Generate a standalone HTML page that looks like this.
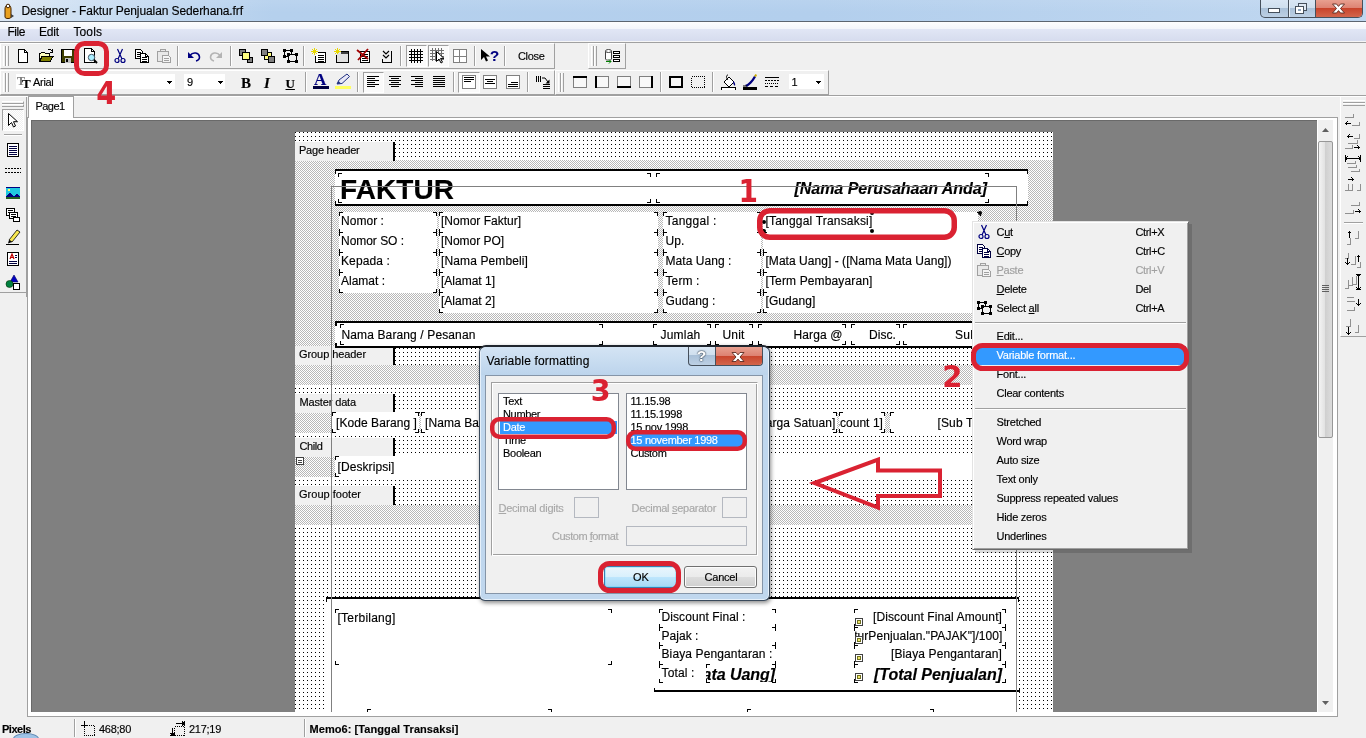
<!DOCTYPE html><html><head><meta charset="utf-8"><title>Designer - Faktur Penjualan Sederhana.frf</title><style>
html,body{margin:0;padding:0}
body{will-change:transform;width:1366px;height:738px;overflow:hidden;position:relative;background:#f0f0f0;font-family:"Liberation Sans",sans-serif;font-size:11px;color:#000}
.a{position:absolute;box-sizing:border-box}
.t{position:absolute;white-space:nowrap;overflow:visible;-webkit-text-stroke:.15px}
.tb{border:1px solid;border-color:#fff #a0a0a0 #a0a0a0 #fff}
.grip{border-left:1px solid #fff;border-right:1px solid #a0a0a0;width:3px;background:#f0f0f0}
.sep{width:2px;border-left:1px solid #a0a0a0;border-right:1px solid #fff}
.dn{background:#fafafa;border:1px solid;border-color:#a0a0a0 #fff #fff #a0a0a0}
.dots{background-color:#fff;background-image:linear-gradient(90deg,#000 1px,#fff 1px),linear-gradient(#000 1px,#fff 1px);background-size:4px 4px;background-blend-mode:lighten,normal}
.hatch{background:repeating-conic-gradient(#fff 0 25%,#b8b8b8 0 50%) 0 0/2px 2px}
.lab{background:#f0f0f0;border-right:2px solid #000}
.w{background:#fff}
.k{background:#000}
.u{text-decoration:underline}
.m{font-family:"Liberation Sans",sans-serif}
</style></head><body>
<div class="a" style="left:0px;top:0px;width:1366px;height:21px;background:linear-gradient(90deg,#dde8f5 0,#cbdef2 7%,#b5d0ed 20%,#b3cfed 60%,#c0d7f0 100%)"></div>
<div class="a" style="left:0px;top:0px;width:1366px;height:21px;background:linear-gradient(rgba(255,255,255,.08),rgba(255,255,255,0) 60%)"></div>
<div class="a" style="left:0px;top:21px;width:1366px;height:1px;background:#5c6570"></div>
<svg class="a" style="left:3px;top:3px" width="12" height="17" viewBox="0 0 12 17"><path d="M2 6c0-2 1-4 3-4s3 2 3 4v8c0 2-6 2-6 0z" fill="#e8a020" stroke="#402000"/><circle cx="5" cy="3" r="1.800" fill="#fff" stroke="#402000"/><path d="M8 11l3 2l-3 2z" fill="#404040"/></svg>
<div class="t" style="left:21.5px;top:3px;height:17px;line-height:17px;font-size:12px;letter-spacing:-0.097px;">Designer - Faktur Penjualan Sederhana.frf</div>
<div class="a" style="left:1260px;top:0px;width:103px;height:18px;border:1px solid #46505c;border-top:none;border-radius:0 0 5px 5px;overflow:hidden;background:linear-gradient(#d9e6f4 0,#cfdfee 45%,#a9c0d8 46%,#bdd0e4 100%)"><div class="a" style="left:27px;top:0;width:1px;height:18px;background:#46505c"></div><div class="a" style="left:28px;top:0;width:1px;height:18px;background:#e8f0f8"></div><div class="a" style="left:54px;top:0;width:48px;height:18px;border-left:1px solid #46505c;background:linear-gradient(#e8a090 0,#dd8272 45%,#c8432b 46%,#d4694f 100%)"></div></div>
<svg class="a" style="left:1260px;top:0" width="103" height="18" viewBox="0 0 103 18"><rect x="8.500" y="8.500" width="11" height="4" fill="#fff" stroke="#46505c"/><rect x="38.500" y="3.500" width="8" height="7" fill="#dfe9f4" stroke="#46505c"/><rect x="35.500" y="6.500" width="8" height="7" fill="#fff" stroke="#46505c"/><rect x="38" y="9" width="3" height="2" fill="#8fa6bf"/><path d="M72.500 4h4l2 2.400l2-2.400h4l-4 4.500l4 4.500h-4l-2-2.400l-2 2.400h-4l4-4.500z" fill="#fff" stroke="#5a2a20" stroke-width=".9"/></svg>
<div class="a" style="left:0px;top:22px;width:1366px;height:19px;background:linear-gradient(#fdfdfe 0,#f4f6fb 35%,#e1e6f5 38%,#d6dcee 100%)"></div>
<div class="a" style="left:0px;top:41px;width:1366px;height:1px;background:#f6f6f6"></div>
<div class="a" style="left:0px;top:42px;width:1366px;height:1px;background:#a0a0a0"></div>
<div class="t" style="left:7.5px;top:24px;height:16px;line-height:16px;font-size:12px;letter-spacing:-0.459px;">File</div>
<div class="t" style="left:39px;top:24px;height:16px;line-height:16px;font-size:12px;letter-spacing:-0.169px;">Edit</div>
<div class="t" style="left:73.5px;top:24px;height:16px;line-height:16px;font-size:12px;letter-spacing:0.097px;">Tools</div>
<div class="a tb" style="left:0px;top:43px;width:555px;height:26px;"></div>
<div class="a grip" style="left:3px;top:46px;width:3px;height:20px;"></div>
<div class="a grip" style="left:6px;top:46px;width:3px;height:20px;"></div>
<div class="a dn" style="left:405.5px;top:45px;width:21.0px;height:22px;"></div>
<div class="a dn" style="left:427.5px;top:45px;width:21.0px;height:22px;"></div>
<svg class="a" style="left:15px;top:48px" width="16" height="16" viewBox="0 0 16 16" shape-rendering="crispEdges"><path d="M3.5 1.5h6l3 3v10h-9z" fill="#fff" stroke="#000"/><path d="M9.5 1.5v3h3" fill="none" stroke="#000"/></svg>
<svg class="a" style="left:38px;top:48px" width="16" height="16" viewBox="0 0 16 16" shape-rendering="crispEdges"><path d="M1.5 13.5v-8h1l1-1h3l1 1h4v2" fill="#ffffc0" stroke="#000"/><path d="M1.5 13.5l2.5-5h11l-3 5z" fill="#808000" stroke="#000"/><path d="M9.5 2.5c1.5-1.5 3.5-1 4 .5" fill="none" stroke="#000"/><path d="M14.5 1v3h-3" fill="none" stroke="#000"/></svg>
<svg class="a" style="left:60px;top:48px" width="16" height="16" viewBox="0 0 16 16" shape-rendering="crispEdges"><rect x="1.5" y="1.5" width="13" height="13" fill="#404000" stroke="#000"/><rect x="4" y="2" width="8" height="6" fill="#fff"/><rect x="5" y="10" width="6" height="5" fill="#c0c0c0"/><rect x="6" y="11" width="2" height="3" fill="#000"/></svg>
<svg class="a" style="left:82px;top:48px" width="16" height="16" viewBox="0 0 16 16" shape-rendering="crispEdges"><path d="M2.5 .5h7l3 3v11h-10z" fill="#fff" stroke="#000"/><path d="M9.5 .5v3h3" fill="none" stroke="#000"/><circle cx="9.5" cy="9.5" r="3.2" fill="#aef" stroke="#456" shape-rendering="auto"/><path d="M12 12l3 3" stroke="#000" stroke-width="2" shape-rendering="auto"/></svg>
<svg class="a" style="left:112px;top:48px" width="16" height="16" viewBox="0 0 16 16" shape-rendering="crispEdges"><g shape-rendering="auto" fill="none" stroke="#000080" stroke-width="1.2"><path d="M5.5 1l4.5 10M10.5 1l-4.5 10"/><circle cx="5" cy="12.5" r="2"/><circle cx="11" cy="12.5" r="2"/></g></svg>
<svg class="a" style="left:134px;top:48px" width="16" height="16" viewBox="0 0 16 16" shape-rendering="crispEdges"><path d="M1.5 1.5h5l2 2v7h-7z" fill="#fff" stroke="#000"/><rect x="3" y="4" width="4" height="1" fill="#000"/><rect x="3" y="6" width="4" height="1" fill="#000"/><rect x="3" y="8" width="4" height="1" fill="#000"/><path d="M6.5 5.5h5l3 3v6h-8z" fill="#fff" stroke="#000"/><path d="M11.5 5.5v3h3" fill="none" stroke="#000"/><rect x="8" y="9" width="5" height="1" fill="#000"/><rect x="8" y="11" width="5" height="1" fill="#000"/><rect x="8" y="13" width="5" height="1" fill="#000"/></svg>
<svg class="a" style="left:156px;top:48px" width="16" height="16" viewBox="0 0 16 16" shape-rendering="crispEdges"><path d="M1.5 3.5h11v10h-11z" fill="#e8e8e8" stroke="#a0a0a0"/><path d="M4.5 3.5v-2h5v2z" fill="#e8e8e8" stroke="#a0a0a0"/><path d="M6.5 7.5h6l2 2v5h-8z" fill="#f4f4f4" stroke="#a0a0a0"/><rect x="8" y="10" width="5" height="1" fill="#a0a0a0"/><rect x="8" y="12" width="5" height="1" fill="#a0a0a0"/></svg>
<svg class="a" style="left:186px;top:48px" width="16" height="16" viewBox="0 0 16 16" shape-rendering="crispEdges"><g shape-rendering="auto"><path d="M4 7.5c3-4 9-3 9.500 1.500c0 2-1.500 3.500-3.500 4" fill="none" stroke="#000080" stroke-width="1.600"/><path d="M2 4v6h6z" fill="#000080"/></g></svg>
<svg class="a" style="left:208px;top:48px" width="16" height="16" viewBox="0 0 16 16" shape-rendering="crispEdges"><g shape-rendering="auto"><path d="M12 7.5c-3-4-9-3-9.500 1.500c0 2 1.500 3.500 3.500 4" fill="none" stroke="#b4b4b4" stroke-width="1.600"/><path d="M14 4v6h-6z" fill="#b4b4b4"/></g></svg>
<svg class="a" style="left:238px;top:48px" width="16" height="16" viewBox="0 0 16 16" shape-rendering="crispEdges"><rect x="1.500" y="1.500" width="6" height="6" fill="#808080" stroke="#000"/><rect x="9.500" y="9.500" width="5" height="5" fill="#808080" stroke="#000"/><rect x="4.500" y="4.500" width="7" height="7" fill="#ffff80" stroke="#000"/></svg>
<svg class="a" style="left:260px;top:48px" width="16" height="16" viewBox="0 0 16 16" shape-rendering="crispEdges"><rect x="4.500" y="4.500" width="7" height="7" fill="#ffff80" stroke="#000"/><rect x="1.500" y="1.500" width="6" height="6" fill="#808080" stroke="#000"/><rect x="8.500" y="8.500" width="6" height="6" fill="#808080" stroke="#000"/></svg>
<svg class="a" style="left:282px;top:48px" width="16" height="16" viewBox="0 0 16 16" shape-rendering="crispEdges"><rect x="2.500" y="2.500" width="7" height="6" fill="none" stroke="#000"/><rect x="6.500" y="6.500" width="8" height="7" fill="#f0f0f0" stroke="#000"/><rect x="1" y="1" width="3" height="3" fill="#000"/><rect x="8" y="1" width="3" height="3" fill="#000"/><rect x="1" y="7" width="3" height="3" fill="#000"/><rect x="5" y="5" width="3" height="3" fill="#000"/><rect x="13" y="5" width="3" height="3" fill="#000"/><rect x="5" y="12" width="3" height="3" fill="#000"/><rect x="13" y="12" width="3" height="3" fill="#000"/></svg>
<svg class="a" style="left:311px;top:48px" width="16" height="16" viewBox="0 0 16 16" shape-rendering="crispEdges"><g fill="#e8d800"><rect x="3" y="0" width="1" height="7"/><rect x="0" y="3" width="7" height="1"/><rect x="1" y="1" width="1" height="1"/><rect x="5" y="1" width="1" height="1"/><rect x="1" y="5" width="1" height="1"/><rect x="5" y="5" width="1" height="1"/><rect x="2" y="2" width="3" height="3"/></g><path d="M6.500 4.500h8v10h-10v-7" fill="#fff" stroke="#000"/><rect x="7" y="7" width="6" height="1" fill="#000"/><rect x="7" y="9" width="6" height="1" fill="#000"/><rect x="7" y="11" width="6" height="1" fill="#000"/><rect x="7" y="13" width="6" height="1" fill="#000"/></svg>
<svg class="a" style="left:334px;top:48px" width="16" height="16" viewBox="0 0 16 16" shape-rendering="crispEdges"><g fill="#e8d800"><rect x="3" y="0" width="1" height="7"/><rect x="0" y="3" width="7" height="1"/><rect x="1" y="1" width="1" height="1"/><rect x="5" y="1" width="1" height="1"/><rect x="1" y="5" width="1" height="1"/><rect x="5" y="5" width="1" height="1"/><rect x="2" y="2" width="3" height="3"/></g><path d="M6.500 3.500h8v11h-12v-8" fill="#e0e0e0" stroke="#000"/><rect x="7" y="4" width="7" height="2" fill="#404040"/></svg>
<svg class="a" style="left:356px;top:48px" width="16" height="16" viewBox="0 0 16 16" shape-rendering="crispEdges"><path d="M4.500 3.500h9v11h-9z" fill="#fff" stroke="#000"/><rect x="6" y="6" width="6" height="1" fill="#000"/><rect x="6" y="8" width="6" height="1" fill="#000"/><rect x="6" y="10" width="6" height="1" fill="#000"/><rect x="6" y="12" width="6" height="1" fill="#000"/><g shape-rendering="auto"><path d="M1 2l11 9M12 1l-10 11" stroke="#a00000" stroke-width="1.800"/></g></svg>
<svg class="a" style="left:379px;top:48px" width="16" height="16" viewBox="0 0 16 16" shape-rendering="crispEdges"><path d="M12.500 3v11.500h-9v-4" fill="none" stroke="#000"/><g shape-rendering="auto" fill="none" stroke="#000" stroke-width="1.200"><path d="M4 3l3 3l3-3M4 7l3 3l3-3"/></g></svg>
<svg class="a" style="left:408px;top:48px" width="16" height="16" viewBox="0 0 16 16" shape-rendering="crispEdges"><rect x="3" y="1" width="1" height="14" fill="#000"/><rect x="1" y="3" width="14" height="1" fill="#000"/><rect x="6" y="1" width="1" height="14" fill="#000"/><rect x="1" y="6" width="14" height="1" fill="#000"/><rect x="9" y="1" width="1" height="14" fill="#000"/><rect x="1" y="9" width="14" height="1" fill="#000"/><rect x="12" y="1" width="1" height="14" fill="#000"/><rect x="1" y="12" width="14" height="1" fill="#000"/></svg>
<svg class="a" style="left:430px;top:48px" width="16" height="16" viewBox="0 0 16 16" shape-rendering="crispEdges"><rect x="2" y="0" width="1" height="13" fill="#707070"/><rect x="0" y="2" width="14" height="1" fill="#707070"/><rect x="5" y="0" width="1" height="13" fill="#707070"/><rect x="0" y="5" width="14" height="1" fill="#707070"/><rect x="8" y="0" width="1" height="13" fill="#707070"/><rect x="0" y="8" width="14" height="1" fill="#707070"/><rect x="11" y="0" width="1" height="13" fill="#707070"/><rect x="0" y="11" width="14" height="1" fill="#707070"/><path d="M6.500 3.500v10l2.500-2.500l2 4l1.500-.8l-2-3.800h3.500z" fill="#fff" stroke="#000" shape-rendering="auto"/></svg>
<svg class="a" style="left:452px;top:48px" width="16" height="16" viewBox="0 0 16 16" shape-rendering="crispEdges"><rect x="1.500" y="1.500" width="13" height="13" fill="#fff" stroke="#808080"/><rect x="7" y="2" width="1" height="12" fill="#808080"/><rect x="2" y="8" width="12" height="1" fill="#808080"/></svg>
<svg class="a" style="left:480px;top:48px" width="16" height="16" viewBox="0 0 16 16" shape-rendering="crispEdges"><path d="M1 1v11l3-3l2 4.500l2-1l-2-4h4z" fill="#000" shape-rendering="auto"/></svg>
<div class="t" style="left:490px;top:46px;height:20px;line-height:20px;font-size:15px;font-weight:bold;color:#000080;">?</div>
<div class="a sep" style="left:177px;top:46px;width:2px;height:20px;"></div>
<div class="a sep" style="left:229.5px;top:46px;width:2px;height:20px;"></div>
<div class="a sep" style="left:303px;top:46px;width:2px;height:20px;"></div>
<div class="a sep" style="left:400px;top:46px;width:2px;height:20px;"></div>
<div class="a sep" style="left:473.5px;top:46px;width:2px;height:20px;"></div>
<div class="a sep" style="left:503.5px;top:46px;width:2px;height:20px;"></div>
<div class="t" style="left:518px;top:49px;height:14px;line-height:14px;font-size:11px;letter-spacing:-0.325px;">Close</div>
<div class="a tb" style="left:588px;top:43px;width:38px;height:26px;"></div>
<div class="a grip" style="left:591px;top:46px;width:3px;height:20px;"></div>
<div class="a grip" style="left:594px;top:46px;width:3px;height:20px;"></div>
<svg class="a" style="left:604px;top:48px" width="16" height="16" viewBox="0 0 16 16" shape-rendering="crispEdges"><g shape-rendering="auto"><path d="M1.500 3v8c0 1.500 6 1.500 6 0v-8" fill="#fff" stroke="#404040"/><ellipse cx="4.500" cy="3" rx="3" ry="1.500" fill="#fff" stroke="#404040"/></g><rect x="9.500" y="3.500" width="6" height="2" fill="#fff" stroke="#000"/><rect x="9.500" y="7.500" width="6" height="2" fill="#fff" stroke="#000"/><rect x="9.500" y="11.500" width="6" height="2" fill="#fff" stroke="#000"/><path d="M2 13.500h5M5 11.500l2 2l-2 2" fill="none" stroke="#008000" shape-rendering="auto"/></svg>
<div class="a tb" style="left:0px;top:70px;width:555px;height:25px;"></div>
<div class="a grip" style="left:3px;top:73px;width:3px;height:19px;"></div>
<div class="a grip" style="left:6px;top:73px;width:3px;height:19px;"></div>
<div class="a" style="left:16px;top:74px;width:159px;height:15px;background:#fff"></div>
<div class="t" style="left:17px;top:73px;height:16px;line-height:16px;font-size:12px;font-weight:bold;color:#808080;font-family:'Liberation Serif',serif;">T</div>
<div class="t" style="left:22px;top:76px;height:16px;line-height:16px;font-size:13px;font-weight:bold;font-family:'Liberation Serif',serif;">T</div>
<div class="t" style="left:33px;top:75px;height:14px;line-height:14px;font-size:11px;letter-spacing:-0.301px;">Arial</div>
<svg class="a" style="left:167px;top:81px" width="5" height="3" shape-rendering="crispEdges"><path d="M0 0h5v1h-1v1h-1v1h-1v-1h-1v-1h-1z" fill="#000"/></svg>
<div class="a" style="left:184px;top:74px;width:41px;height:15px;background:#fff"></div>
<div class="t" style="left:187px;top:75px;height:14px;line-height:14px;font-size:11px;">9</div>
<svg class="a" style="left:218px;top:81px" width="5" height="3" shape-rendering="crispEdges"><path d="M0 0h5v1h-1v1h-1v1h-1v-1h-1v-1h-1z" fill="#000"/></svg>
<div class="t" style="left:241px;top:74px;height:18px;line-height:18px;font-size:15px;font-weight:bold;font-family:'Liberation Serif',serif;">B</div>
<div class="t" style="left:264px;top:74px;height:18px;line-height:18px;font-size:15px;font-weight:bold;font-style:italic;font-family:'Liberation Serif',serif;">I</div>
<div class="t" style="left:285.5px;top:75px;height:18px;line-height:18px;font-size:13px;font-weight:bold;font-family:'Liberation Serif',serif;text-decoration:underline;">U</div>
<div class="a sep" style="left:304.5px;top:72px;width:2px;height:20px;"></div>
<div class="t" style="left:314px;top:70px;height:20px;line-height:20px;font-size:17px;font-weight:bold;color:#000080;font-family:'Liberation Serif',serif;">A</div>
<div class="a" style="left:313px;top:86px;width:16px;height:3px;background:#000040"></div>
<svg class="a" style="left:335px;top:73px" width="16" height="14" viewBox="0 0 16 14"><path d="M2 11l2-4l8-6l2.500 2.500l-7.500 7z" fill="#e8e8f8" stroke="#203080" stroke-width="1"/><path d="M2 11l1.500-3l2.500 2.500z" fill="#203080"/></svg>
<div class="a" style="left:335px;top:86px;width:16px;height:3px;background:#ffff60"></div>
<div class="a sep" style="left:356.5px;top:72px;width:2px;height:20px;"></div>
<div class="a dn" style="left:362.5px;top:72px;width:21.0px;height:21px;"></div>
<svg class="a" style="left:365px;top:74px" width="16" height="16" viewBox="0 0 16 16" shape-rendering="crispEdges"><rect x="2" y="2" width="12" height="1" fill="#000"/><rect x="2" y="4" width="8" height="1" fill="#000"/><rect x="2" y="6" width="12" height="1" fill="#000"/><rect x="2" y="8" width="8" height="1" fill="#000"/><rect x="2" y="10" width="12" height="1" fill="#000"/><rect x="2" y="12" width="8" height="1" fill="#000"/></svg>
<svg class="a" style="left:387px;top:74px" width="16" height="16" viewBox="0 0 16 16" shape-rendering="crispEdges"><rect x="2" y="2" width="12" height="1" fill="#000"/><rect x="4" y="4" width="8" height="1" fill="#000"/><rect x="2" y="6" width="12" height="1" fill="#000"/><rect x="4" y="8" width="8" height="1" fill="#000"/><rect x="2" y="10" width="12" height="1" fill="#000"/><rect x="4" y="12" width="8" height="1" fill="#000"/></svg>
<svg class="a" style="left:409px;top:74px" width="16" height="16" viewBox="0 0 16 16" shape-rendering="crispEdges"><rect x="2" y="2" width="12" height="1" fill="#000"/><rect x="6" y="4" width="8" height="1" fill="#000"/><rect x="2" y="6" width="12" height="1" fill="#000"/><rect x="6" y="8" width="8" height="1" fill="#000"/><rect x="2" y="10" width="12" height="1" fill="#000"/><rect x="6" y="12" width="8" height="1" fill="#000"/></svg>
<svg class="a" style="left:431px;top:74px" width="16" height="16" viewBox="0 0 16 16" shape-rendering="crispEdges"><rect x="2" y="2" width="12" height="1" fill="#000"/><rect x="2" y="4" width="12" height="1" fill="#000"/><rect x="2" y="6" width="12" height="1" fill="#000"/><rect x="2" y="8" width="12" height="1" fill="#000"/><rect x="2" y="10" width="12" height="1" fill="#000"/><rect x="2" y="12" width="12" height="1" fill="#000"/></svg>
<div class="a sep" style="left:453px;top:72px;width:2px;height:20px;"></div>
<div class="a dn" style="left:458px;top:72px;width:22px;height:21px;"></div>
<svg class="a" style="left:461px;top:74px" width="16" height="16" viewBox="0 0 16 16" shape-rendering="crispEdges"><rect x="1.500" y="1.500" width="13" height="13" fill="#fff" stroke="#808080"/><rect x="3" y="3" width="10" height="1" fill="#000"/><rect x="3" y="5" width="10" height="1" fill="#000"/><rect x="3" y="7" width="7" height="1" fill="#000"/></svg>
<svg class="a" style="left:482px;top:74px" width="16" height="16" viewBox="0 0 16 16" shape-rendering="crispEdges"><rect x="1.500" y="1.500" width="13" height="13" fill="#fff" stroke="#808080"/><rect x="3" y="5" width="10" height="1" fill="#000"/><rect x="5" y="7" width="6" height="1" fill="#000"/><rect x="3" y="9" width="10" height="1" fill="#000"/></svg>
<svg class="a" style="left:505px;top:74px" width="16" height="16" viewBox="0 0 16 16" shape-rendering="crispEdges"><rect x="1.500" y="1.500" width="13" height="13" fill="#fff" stroke="#808080"/><rect x="6" y="8" width="7" height="1" fill="#000"/><rect x="3" y="10" width="10" height="1" fill="#000"/><rect x="3" y="12" width="10" height="1" fill="#000"/></svg>
<div class="a sep" style="left:526.5px;top:72px;width:2px;height:20px;"></div>
<svg class="a" style="left:535px;top:74px" width="16" height="16" viewBox="0 0 16 16" shape-rendering="crispEdges"><rect x="1" y="2" width="1" height="6" fill="#000"/><rect x="3" y="2" width="1" height="6" fill="#000"/><rect x="5" y="2" width="1" height="6" fill="#000"/><path d="M7 4h3l3 4" fill="none" stroke="#000" shape-rendering="auto"/><path d="M14.500 5.500v4h-4z" fill="#000" shape-rendering="auto"/><rect x="8" y="10" width="7" height="1" fill="#000"/><rect x="8" y="12" width="7" height="1" fill="#000"/><rect x="8" y="14" width="7" height="1" fill="#000"/></svg>
<div class="a tb" style="left:555px;top:70px;width:274px;height:25px;"></div>
<div class="a grip" style="left:558px;top:73px;width:3px;height:19px;"></div>
<div class="a grip" style="left:561px;top:73px;width:3px;height:19px;"></div>
<svg class="a" style="left:572px;top:74px" width="16" height="16" viewBox="0 0 16 16" shape-rendering="crispEdges"><rect x="1.500" y="2.500" width="13" height="11" fill="#f8f8f8" stroke="#808080"/><rect x="1" y="2" width="14" height="2" fill="#000"/></svg>
<svg class="a" style="left:594px;top:74px" width="16" height="16" viewBox="0 0 16 16" shape-rendering="crispEdges"><rect x="1.500" y="2.500" width="13" height="11" fill="#f8f8f8" stroke="#808080"/><rect x="1" y="2" width="2" height="12" fill="#000"/></svg>
<svg class="a" style="left:616px;top:74px" width="16" height="16" viewBox="0 0 16 16" shape-rendering="crispEdges"><rect x="1.500" y="2.500" width="13" height="11" fill="#f8f8f8" stroke="#808080"/><rect x="1" y="12" width="14" height="2" fill="#000"/></svg>
<svg class="a" style="left:638px;top:74px" width="16" height="16" viewBox="0 0 16 16" shape-rendering="crispEdges"><rect x="1.500" y="2.500" width="13" height="11" fill="#f8f8f8" stroke="#808080"/><rect x="13" y="2" width="2" height="12" fill="#000"/></svg>
<svg class="a" style="left:668px;top:74px" width="16" height="16" viewBox="0 0 16 16" shape-rendering="crispEdges"><rect x="2" y="3" width="12" height="10" fill="#f8f8f8" stroke="#000" stroke-width="2"/></svg>
<svg class="a" style="left:690px;top:74px" width="16" height="16" viewBox="0 0 16 16" shape-rendering="crispEdges"><rect x="1.500" y="2.500" width="13" height="11" fill="none" stroke="#000" stroke-dasharray="1 1"/></svg>
<svg class="a" style="left:720px;top:74px" width="16" height="16" viewBox="0 0 16 16" shape-rendering="crispEdges"><g shape-rendering="auto"><path d="M4 8l5-5l5 5l-5 5z" fill="#fff" stroke="#000"/><path d="M8 1c-2 0-2 3 0 5" fill="none" stroke="#000"/><path d="M13 7c2 1 2.500 3 2 5c-1.500-1-2-3-2-5z" fill="#000080"/></g><rect x="1" y="13" width="14" height="3" fill="#fff" stroke="#000" stroke-width="1"/></svg>
<svg class="a" style="left:742px;top:74px" width="16" height="16" viewBox="0 0 16 16" shape-rendering="crispEdges"><g shape-rendering="auto"><path d="M3 11c3-1 6-4 9-9l2 1c-3 5-6 8-9 10z" fill="#000080"/><path d="M12 2l1.500-2l1.500 1l-1 2z" fill="#c8a800"/><path d="M1 12h4" stroke="#000"/></g><rect x="1" y="13" width="14" height="3" fill="#000"/></svg>
<svg class="a" style="left:764px;top:74px" width="16" height="16" viewBox="0 0 16 16" shape-rendering="crispEdges"><rect x="1" y="3" width="14" height="1" fill="#000"/><rect x="1" y="6" width="2" height="1" fill="#000"/><rect x="4" y="6" width="2" height="1" fill="#000"/><rect x="7" y="6" width="2" height="1" fill="#000"/><rect x="10" y="6" width="2" height="1" fill="#000"/><rect x="13" y="6" width="2" height="1" fill="#000"/><rect x="1" y="9" width="1" height="1" fill="#000"/><rect x="3" y="9" width="1" height="1" fill="#000"/><rect x="5" y="9" width="1" height="1" fill="#000"/><rect x="7" y="9" width="1" height="1" fill="#000"/><rect x="9" y="9" width="1" height="1" fill="#000"/><rect x="11" y="9" width="1" height="1" fill="#000"/><rect x="13" y="9" width="1" height="1" fill="#000"/><rect x="1" y="12" width="3" height="1" fill="#000"/><rect x="6" y="12" width="3" height="1" fill="#000"/><rect x="11" y="12" width="3" height="1" fill="#000"/></svg>
<div class="a sep" style="left:659.5px;top:72px;width:2px;height:20px;"></div>
<div class="a sep" style="left:711.5px;top:72px;width:2px;height:20px;"></div>
<div class="a" style="left:789px;top:74px;width:35px;height:15px;background:#fff"></div>
<div class="t" style="left:791.5px;top:75px;height:14px;line-height:14px;font-size:11px;">1</div>
<svg class="a" style="left:816px;top:81px" width="5" height="3" shape-rendering="crispEdges"><path d="M0 0h5v1h-1v1h-1v1h-1v-1h-1v-1h-1z" fill="#000"/></svg>
<div class="a" style="left:0px;top:95px;width:1366px;height:1px;background:#a0a0a0"></div>
<div class="a" style="left:0px;top:96px;width:1366px;height:1px;background:#fff"></div>
<div class="a" style="left:0px;top:97px;width:27px;height:196px;border-right:1px solid #a0a0a0;border-bottom:1px solid #a0a0a0"></div>
<div class="a" style="left:26px;top:97px;width:1px;height:200px;background:#a0a0a0"></div>
<div class="a" style="left:2px;top:101px;width:22px;height:3px;border-top:1px solid #fff;border-bottom:1px solid #a0a0a0;border-right:1px solid #a0a0a0"></div>
<div class="a" style="left:2px;top:104px;width:22px;height:3px;border-top:1px solid #fff;border-bottom:1px solid #a0a0a0;border-right:1px solid #a0a0a0"></div>
<div class="a" style="left:2px;top:109px;width:22px;height:22px;border:1px solid;border-color:#a0a0a0 #fff #fff #a0a0a0;background:repeating-conic-gradient(#fff 0 25%,#f0f0f0 0 50%) 0 0/2px 2px"></div>
<svg class="a" style="left:5px;top:112px" width="16" height="16" viewBox="0 0 16 16" shape-rendering="crispEdges"><path d="M3.500 1.500v12l3-3l2 4.500l2-1l-2-4.300h4z" fill="#fff" stroke="#000" shape-rendering="auto"/></svg>
<div class="a" style="left:4px;top:134px;width:18px;height:2px;border-top:1px solid #a0a0a0;border-bottom:1px solid #fff"></div>
<svg class="a" style="left:5px;top:142px" width="16" height="16" viewBox="0 0 16 16" shape-rendering="crispEdges"><rect x="2.500" y="1.500" width="11" height="13" fill="#fff" stroke="#000"/><rect x="4" y="4" width="8" height="1" fill="#000040"/><rect x="4" y="6" width="8" height="1" fill="#000040"/><rect x="4" y="8" width="8" height="1" fill="#000040"/><rect x="4" y="10" width="8" height="1" fill="#000040"/><rect x="4" y="12" width="8" height="1" fill="#000040"/></svg>
<svg class="a" style="left:5px;top:163px" width="16" height="16" viewBox="0 0 16 16" shape-rendering="crispEdges"><rect x="0" y="5" width="2" height="1" fill="#000"/><rect x="0" y="9" width="2" height="1" fill="#000"/><rect x="3" y="5" width="2" height="1" fill="#000"/><rect x="3" y="9" width="2" height="1" fill="#000"/><rect x="6" y="5" width="2" height="1" fill="#000"/><rect x="6" y="9" width="2" height="1" fill="#000"/><rect x="9" y="5" width="2" height="1" fill="#000"/><rect x="9" y="9" width="2" height="1" fill="#000"/><rect x="12" y="5" width="2" height="1" fill="#000"/><rect x="12" y="9" width="2" height="1" fill="#000"/><rect x="15" y="5" width="2" height="1" fill="#000"/><rect x="15" y="9" width="2" height="1" fill="#000"/></svg>
<svg class="a" style="left:5px;top:185px" width="16" height="16" viewBox="0 0 16 16" shape-rendering="crispEdges"><rect x="1" y="2" width="14" height="12" fill="#20c8e0"/><rect x="1" y="2" width="14" height="1" fill="#000080"/><path d="M1 14v-3l4-3l4 3l3-2l3 2v3z" fill="#000080"/><rect x="1" y="12" width="14" height="2" fill="#206020"/><rect x="3" y="4" width="2" height="2" fill="#ffff60"/></svg>
<svg class="a" style="left:5px;top:207px" width="16" height="16" viewBox="0 0 16 16" shape-rendering="crispEdges"><rect x="1.500" y="1.500" width="8" height="7" fill="#fff" stroke="#000"/><rect x="3" y="3" width="5" height="1" fill="#000"/><rect x="3" y="5" width="5" height="1" fill="#000"/><rect x="4.500" y="5.500" width="8" height="6" fill="#fff" stroke="#000"/><rect x="6" y="7" width="5" height="1" fill="#000"/><rect x="6" y="9" width="5" height="1" fill="#000"/><rect x="8.500" y="10.500" width="6" height="4" fill="#fff" stroke="#000"/></svg>
<svg class="a" style="left:5px;top:229px" width="16" height="16" viewBox="0 0 16 16" shape-rendering="crispEdges"><g shape-rendering="auto"><path d="M4 11l8-10l3 2l-8 10z" fill="#f8e850" stroke="#000" stroke-width=".8"/><path d="M4 11l-1 3.500l4-1.500z" fill="#000"/><path d="M1 15.500h13" stroke="#000"/></g></svg>
<svg class="a" style="left:5px;top:251px" width="16" height="16" viewBox="0 0 16 16" shape-rendering="crispEdges"><rect x="2.500" y="1.500" width="11" height="13" fill="#fff" stroke="#000"/><rect x="4" y="10" width="8" height="1" fill="#000040"/><rect x="4" y="12" width="8" height="1" fill="#000040"/><g shape-rendering="auto"><path d="M5 8l2-5l2 5M5.800 6.500h2.400" fill="none" stroke="#c00000" stroke-width="1.200"/></g><rect x="10" y="4" width="2" height="1" fill="#000040"/><rect x="10" y="6" width="2" height="1" fill="#000040"/></svg>
<svg class="a" style="left:5px;top:274px" width="16" height="16" viewBox="0 0 16 16" shape-rendering="crispEdges"><g shape-rendering="auto"><path d="M9 1l4 7h-8z" fill="#0000c0" stroke="#000060" stroke-width=".6"/><circle cx="4.500" cy="10" r="3.500" fill="#008040" stroke="#003000" stroke-width=".6"/></g><rect x="8.500" y="9.500" width="6" height="6" fill="#fff" stroke="#000"/></svg>
<div class="a" style="left:27px;top:117px;width:1311px;height:600px;background:#fff;border:1px solid #a0a0a0;border-bottom-color:#a0a0a0"></div>
<div class="a" style="left:28px;top:96px;width:46px;height:22px;background:#fff;border:1px solid #a0a0a0;border-bottom:none"></div>
<div class="t" style="left:35.5px;top:99px;height:14px;line-height:14px;font-size:11px;letter-spacing:-0.562px;">Page1</div>
<div class="a" style="left:31px;top:120px;width:1286px;height:592px;background:#808080;border-top:1px solid #696969;border-left:1px solid #696969"></div>
<div class="a" style="left:1317px;top:120px;width:16px;height:592px;background:#f0f0f0;border-left:1px solid #fff"></div>
<svg class="a" style="left:1322px;top:128px" width="7" height="4"><path d="M0 4h7l-3.500-4z" fill="#606060"/></svg>
<svg class="a" style="left:1322px;top:701px" width="7" height="4"><path d="M0 0h7l-3.500 4z" fill="#606060"/></svg>
<div class="a" style="left:1318px;top:141px;width:15px;height:297px;border:1px solid #979797;border-radius:2px;background:linear-gradient(90deg,#f3f3f3,#e2e2e2 45%,#d0d0d0 50%,#dcdcdc)"></div>
<div class="a" style="left:1322px;top:285px;width:7px;height:1px;background:#606060"></div>
<div class="a" style="left:1322px;top:287px;width:7px;height:1px;background:#606060"></div>
<div class="a" style="left:1322px;top:289px;width:7px;height:1px;background:#606060"></div>
<div class="a" style="left:1322px;top:291px;width:7px;height:1px;background:#606060"></div>
<div class="a dots" style="left:295px;top:132px;width:758px;height:580px;overflow:hidden"></div>
<div class="a" style="left:32px;top:121px;width:1285px;height:591px;overflow:hidden"><div class="a" style="left:-32px;top:-121px;width:1366px;height:738px">
<div class="a hatch" style="left:295px;top:160px;width:758px;height:186px;background-position:1px 0;"></div>
<div class="a lab" style="left:295px;top:142px;width:100px;height:19px;"></div>
<div class="a hatch" style="left:295px;top:365px;width:758px;height:20px;"></div>
<div class="a lab" style="left:295px;top:346px;width:100px;height:19px;"></div>
<div class="a hatch" style="left:295px;top:413px;width:758px;height:20px;"></div>
<div class="a lab" style="left:295px;top:394px;width:100px;height:19px;"></div>
<div class="a hatch" style="left:295px;top:457px;width:758px;height:20px;"></div>
<div class="a lab" style="left:295px;top:438px;width:100px;height:19px;"></div>
<div class="a hatch" style="left:295px;top:505px;width:758px;height:20px;"></div>
<div class="a lab" style="left:295px;top:486px;width:100px;height:19px;"></div>
<div class="t" style="left:299px;top:143px;height:14px;line-height:14px;font-size:11px;letter-spacing:-0.227px;">Page header</div>
<div class="t" style="left:299px;top:347px;height:14px;line-height:14px;font-size:11px;letter-spacing:-0.074px;">Group header</div>
<div class="t" style="left:299.5px;top:395px;height:14px;line-height:14px;font-size:11px;letter-spacing:-0.144px;">Master data</div>
<div class="t" style="left:299.5px;top:439px;height:14px;line-height:14px;font-size:11px;letter-spacing:-0.414px;">Child</div>
<div class="t" style="left:299px;top:487px;height:14px;line-height:14px;font-size:11px;letter-spacing:0.020px;">Group footer</div>
<div class="a w" style="left:335px;top:171px;width:693px;height:34px;"></div>
<div class="a k" style="left:335px;top:169px;width:693px;height:2px;"></div>
<div class="a k" style="left:335px;top:204px;width:693px;height:2px;"></div>
<div class="a k" style="left:335px;top:169px;width:1px;height:5px;"></div>
<div class="a k" style="left:1027px;top:169px;width:1px;height:5px;"></div>
<div class="a k" style="left:335px;top:201px;width:1px;height:5px;"></div>
<div class="a k" style="left:1027px;top:201px;width:1px;height:5px;"></div>
<div class="t" style="left:340px;top:174px;height:32px;line-height:32px;font-size:28px;letter-spacing:0.076px;font-weight:bold;">FAKTUR</div>
<div class="t" style="left:794.50px;top:179px;height:20px;line-height:20px;font-size:16px;letter-spacing:-0.034px;font-weight:bold;font-style:italic;">[Nama Perusahaan Anda]</div>
<div class="a w" style="left:339px;top:212px;width:98px;height:81px;"></div>
<div class="a w" style="left:439px;top:212px;width:219px;height:101px;"></div>
<div class="a w" style="left:663px;top:212px;width:98px;height:101px;"></div>
<div class="a w" style="left:763px;top:212px;width:215px;height:101px;"></div>
<div class="t" style="left:341px;top:214px;height:14px;line-height:14px;font-size:12px;letter-spacing:0.047px;">Nomor :</div>
<div class="t" style="left:341px;top:234px;height:14px;line-height:14px;font-size:12px;letter-spacing:-0.035px;">Nomor SO :</div>
<div class="t" style="left:341px;top:254px;height:14px;line-height:14px;font-size:12px;letter-spacing:0.120px;">Kepada :</div>
<div class="t" style="left:341px;top:274px;height:14px;line-height:14px;font-size:12px;letter-spacing:-0.002px;">Alamat :</div>
<div class="t" style="left:441px;top:214px;height:14px;line-height:14px;font-size:12px;letter-spacing:-0.001px;">[Nomor Faktur]</div>
<div class="t" style="left:441px;top:234px;height:14px;line-height:14px;font-size:12px;letter-spacing:-0.035px;">[Nomor PO]</div>
<div class="t" style="left:441px;top:254px;height:14px;line-height:14px;font-size:12px;letter-spacing:0.117px;">[Nama Pembeli]</div>
<div class="t" style="left:441px;top:274px;height:14px;line-height:14px;font-size:12px;letter-spacing:-0.002px;">[Alamat 1]</div>
<div class="t" style="left:441px;top:294px;height:14px;line-height:14px;font-size:12px;letter-spacing:-0.002px;">[Alamat 2]</div>
<div class="t" style="left:665.5px;top:214px;height:14px;line-height:14px;font-size:12px;letter-spacing:0.255px;">Tanggal :</div>
<div class="t" style="left:665.5px;top:234px;height:14px;line-height:14px;font-size:12px;letter-spacing:0.109px;">Up.</div>
<div class="t" style="left:665.5px;top:254px;height:14px;line-height:14px;font-size:12px;letter-spacing:0.058px;">Mata Uang :</div>
<div class="t" style="left:665.5px;top:274px;height:14px;line-height:14px;font-size:12px;letter-spacing:0.111px;">Term :</div>
<div class="t" style="left:665.5px;top:294px;height:14px;line-height:14px;font-size:12px;letter-spacing:0.079px;">Gudang :</div>
<div class="t" style="left:765.5px;top:214px;height:14px;line-height:14px;font-size:12px;letter-spacing:0.190px;">[Tanggal Transaksi]</div>
<div class="t" style="left:765.5px;top:254px;height:14px;line-height:14px;font-size:12px;letter-spacing:0.040px;">[Mata Uang] - ([Nama Mata Uang])</div>
<div class="t" style="left:765.5px;top:274px;height:14px;line-height:14px;font-size:12px;letter-spacing:0.135px;">[Term Pembayaran]</div>
<div class="t" style="left:765.5px;top:294px;height:14px;line-height:14px;font-size:12px;letter-spacing:0.079px;">[Gudang]</div>
<div class="a w" style="left:335px;top:323px;width:692px;height:23px;"></div>
<div class="a k" style="left:335px;top:321px;width:692px;height:2px;"></div>
<div class="a k" style="left:335px;top:346px;width:692px;height:2px;"></div>
<div class="a k" style="left:335px;top:321px;width:2px;height:5px;"></div>
<div class="a k" style="left:335px;top:343px;width:2px;height:5px;"></div>
<div class="t" style="left:341.5px;top:328px;height:14px;line-height:14px;font-size:12px;letter-spacing:0.123px;">Nama Barang / Pesanan</div>
<div class="t" style="left:660.5px;top:328px;height:14px;line-height:14px;font-size:12px;letter-spacing:0.219px;">Jumlah</div>
<div class="t" style="left:722.5px;top:328px;height:14px;line-height:14px;font-size:12px;letter-spacing:0.165px;">Unit</div>
<div class="t" style="left:793.50px;top:328px;height:14px;line-height:14px;font-size:12px;letter-spacing:0.114px;">Harga @</div>
<div class="t" style="left:869.00px;top:328px;height:14px;line-height:14px;font-size:12px;letter-spacing:0.067px;">Disc.</div>
<div class="t" style="left:955px;top:328px;height:14px;line-height:14px;font-size:12px;letter-spacing:0.243px;">Sub Total</div>
<div class="a w" style="left:332px;top:412px;width:87px;height:21px;overflow:hidden"><div class="t" style="left:4px;top:4px;height:14px;line-height:14px;font-size:12px;letter-spacing:0.067px;">[Kode Barang ]</div></div>
<div class="a w" style="left:421px;top:412px;width:230px;height:21px;overflow:hidden"><div class="t" style="left:4px;top:4px;height:14px;line-height:14px;font-size:12px;letter-spacing:0.099px;">[Nama Barang]</div></div>
<div class="a w" style="left:653px;top:412px;width:184px;height:21px;overflow:hidden"><div class="t" style="left:100.50px;top:4px;height:14px;line-height:14px;font-size:12px;letter-spacing:0.092px;">[Harga Satuan]</div></div>
<div class="a w" style="left:839px;top:412px;width:46px;height:21px;overflow:hidden"><div class="t" style="left:-20.00px;top:4px;height:14px;line-height:14px;font-size:12px;letter-spacing:0.053px;">[Discount 1]</div></div>
<div class="a w" style="left:890px;top:412px;width:127px;height:21px;overflow:hidden"><div class="t" style="left:47.5px;top:4px;height:14px;line-height:14px;font-size:12px;letter-spacing:0.138px;">[Sub Total]</div></div>
<div class="a w" style="left:335px;top:456px;width:682px;height:21px;"></div>
<div class="t" style="left:337.5px;top:460px;height:14px;line-height:14px;font-size:12px;letter-spacing:0.090px;">[Deskripsi]</div>
<svg class="a" style="left:296px;top:457px" width="8" height="8" viewBox="0 0 8 8" shape-rendering="crispEdges"><rect x=".5" y=".5" width="7" height="7" fill="#fff" stroke="#404040"/><rect x="2" y="3" width="4" height="1" fill="#404040"/><rect x="2" y="5" width="4" height="1" fill="#404040"/></svg>
<div class="a w" style="left:327px;top:599px;width:691px;height:113px;"></div>
<div class="a k" style="left:326px;top:597px;width:693px;height:2px;"></div>
<div class="a k" style="left:326px;top:597px;width:1px;height:5px;"></div>
<div class="a k" style="left:1018px;top:597px;width:1px;height:5px;"></div>
<div class="a k" style="left:654px;top:690px;width:366px;height:2px;"></div>
<div class="a k" style="left:654px;top:688px;width:1px;height:4px;"></div>
<div class="a k" style="left:1019px;top:688px;width:1px;height:4px;"></div>
<div class="t" style="left:337.5px;top:611px;height:14px;line-height:14px;font-size:12px;letter-spacing:0.240px;">[Terbilang]</div>
<div class="t" style="left:661.5px;top:610px;height:14px;line-height:14px;font-size:12px;letter-spacing:0.081px;">Discount Final :</div>
<div class="t" style="left:661.5px;top:629px;height:14px;line-height:14px;font-size:12px;letter-spacing:0.045px;">Pajak :</div>
<div class="t" style="left:661.5px;top:647px;height:14px;line-height:14px;font-size:12px;letter-spacing:0.119px;">Biaya Pengantaran :</div>
<div class="t" style="left:661.5px;top:666px;height:14px;line-height:14px;font-size:12px;letter-spacing:0.141px;">Total :</div>
<div class="a" style="left:706px;top:664px;width:70px;height:18px;overflow:hidden"><div class="t" style="left:-22.00px;top:1px;height:20px;line-height:20px;font-size:16px;letter-spacing:-0.050px;font-weight:bold;font-style:italic;">[Mata Uang]</div></div>
<div class="t" style="left:873.00px;top:610px;height:14px;line-height:14px;font-size:12px;letter-spacing:0.099px;">[Discount Final Amount]</div>
<div class="a" style="left:855px;top:628px;width:150px;height:17px;overflow:hidden"><div class="t" style="left:-24.50px;top:1px;height:14px;line-height:14px;font-size:12px;letter-spacing:0.076px;">[FakturPenjualan.&quot;PAJAK&quot;]/100]</div></div>
<div class="t" style="left:891.00px;top:647px;height:14px;line-height:14px;font-size:12px;letter-spacing:0.119px;">[Biaya Pengantaran]</div>
<div class="t" style="left:874.00px;top:665px;height:20px;line-height:20px;font-size:16px;letter-spacing:-0.018px;font-weight:bold;font-style:italic;">[Total Penjualan]</div>
<svg class="a" style="left:855px;top:618px" width="8" height="8" viewBox="0 0 8 8" shape-rendering="crispEdges"><rect x=".5" y=".5" width="7" height="7" fill="#fff" stroke="#404040"/><rect x="2.500" y="2.500" width="3" height="3" fill="#f0e868" stroke="#707020" stroke-width="1"/></svg>
<svg class="a" style="left:855px;top:636px" width="8" height="8" viewBox="0 0 8 8" shape-rendering="crispEdges"><rect x=".5" y=".5" width="7" height="7" fill="#fff" stroke="#404040"/><rect x="2.500" y="2.500" width="3" height="3" fill="#f0e868" stroke="#707020" stroke-width="1"/></svg>
<svg class="a" style="left:855px;top:654px" width="8" height="8" viewBox="0 0 8 8" shape-rendering="crispEdges"><rect x=".5" y=".5" width="7" height="7" fill="#fff" stroke="#404040"/><rect x="2.500" y="2.500" width="3" height="3" fill="#f0e868" stroke="#707020" stroke-width="1"/></svg>
<svg class="a" style="left:855px;top:673px" width="8" height="8" viewBox="0 0 8 8" shape-rendering="crispEdges"><rect x=".5" y=".5" width="7" height="7" fill="#fff" stroke="#404040"/><rect x="2.500" y="2.500" width="3" height="3" fill="#f0e868" stroke="#707020" stroke-width="1"/></svg>
<div class="a" style="left:331px;top:186px;width:686px;height:1px;background:#808080"></div>
<div class="a" style="left:331px;top:186px;width:1px;height:530px;background:#808080"></div>
<div class="a" style="left:1016px;top:186px;width:1px;height:530px;background:#808080"></div>
<svg class="a" style="left:0;top:0" width="1366" height="738" shape-rendering="crispEdges"><path d="M338.5 177V173.5H342M650.5 177V173.5H647M338.5 199V202.5H342M650.5 199V202.5H647M656.5 177V173.5H660M988.5 177V173.5H985M656.5 199V202.5H660M988.5 199V202.5H985M339.5 216V212.5H343M436.5 216V212.5H433M339.5 229V232.5H343M436.5 229V232.5H433M339.5 236V232.5H343M436.5 236V232.5H433M339.5 249V252.5H343M436.5 249V252.5H433M339.5 256V252.5H343M436.5 256V252.5H433M339.5 269V272.5H343M436.5 269V272.5H433M339.5 276V272.5H343M436.5 276V272.5H433M339.5 289V292.5H343M436.5 289V292.5H433M439.5 216V212.5H443M657.5 216V212.5H654M439.5 229V232.5H443M657.5 229V232.5H654M663.5 216V212.5H667M760.5 216V212.5H757M663.5 229V232.5H667M760.5 229V232.5H757M763.5 216V212.5H767M980.5 216V212.5H977M763.5 229V232.5H767M980.5 229V232.5H977M439.5 236V232.5H443M657.5 236V232.5H654M439.5 249V252.5H443M657.5 249V252.5H654M663.5 236V232.5H667M760.5 236V232.5H757M663.5 249V252.5H667M760.5 249V252.5H757M763.5 236V232.5H767M980.5 236V232.5H977M763.5 249V252.5H767M980.5 249V252.5H977M439.5 256V252.5H443M657.5 256V252.5H654M439.5 269V272.5H443M657.5 269V272.5H654M663.5 256V252.5H667M760.5 256V252.5H757M663.5 269V272.5H667M760.5 269V272.5H757M763.5 256V252.5H767M980.5 256V252.5H977M763.5 269V272.5H767M980.5 269V272.5H977M439.5 276V272.5H443M657.5 276V272.5H654M439.5 289V292.5H443M657.5 289V292.5H654M663.5 276V272.5H667M760.5 276V272.5H757M663.5 289V292.5H667M760.5 289V292.5H757M763.5 276V272.5H767M980.5 276V272.5H977M763.5 289V292.5H767M980.5 289V292.5H977M439.5 296V292.5H443M657.5 296V292.5H654M439.5 309V312.5H443M657.5 309V312.5H654M663.5 296V292.5H667M760.5 296V292.5H757M663.5 309V312.5H667M760.5 309V312.5H757M763.5 296V292.5H767M980.5 296V292.5H977M763.5 309V312.5H767M980.5 309V312.5H977M340.5 328V324.5H344M602.5 328V324.5H599M340.5 341V344.5H344M602.5 341V344.5H599M653.5 328V324.5H657M710.5 328V324.5H707M653.5 341V344.5H657M710.5 341V344.5H707M715.5 328V324.5H719M752.5 328V324.5H749M715.5 341V344.5H719M752.5 341V344.5H749M758.5 328V324.5H762M845.5 328V324.5H842M758.5 341V344.5H762M845.5 341V344.5H842M851.5 328V324.5H855M899.5 328V324.5H896M851.5 341V344.5H855M899.5 341V344.5H896M903.5 328V324.5H907M1022.5 328V324.5H1019M903.5 341V344.5H907M1022.5 341V344.5H1019M332.5 416V412.5H336M418.5 416V412.5H415M332.5 429V432.5H336M418.5 429V432.5H415M421.5 416V412.5H425M650.5 416V412.5H647M421.5 429V432.5H425M650.5 429V432.5H647M653.5 416V412.5H657M836.5 416V412.5H833M653.5 429V432.5H657M836.5 429V432.5H833M839.5 416V412.5H843M884.5 416V412.5H881M839.5 429V432.5H843M884.5 429V432.5H881M890.5 416V412.5H894M1016.5 416V412.5H1013M890.5 429V432.5H894M1016.5 429V432.5H1013M335.5 460V456.5H339M1016.5 460V456.5H1013M335.5 473V476.5H339M1016.5 473V476.5H1013M335.5 613V609.5H339M611.5 613V609.5H608M335.5 661V664.5H339M611.5 661V664.5H608M659.5 613V609.5H663M775.5 613V609.5H772M659.5 624V627.5H663M775.5 624V627.5H772M854.5 613V609.5H858M1005.5 613V609.5H1002M854.5 624V627.5H858M1005.5 624V627.5H1002M659.5 631V627.5H663M775.5 631V627.5H772M659.5 642V645.5H663M775.5 642V645.5H772M854.5 631V627.5H858M1005.5 631V627.5H1002M854.5 642V645.5H858M1005.5 642V645.5H1002M659.5 649V645.5H663M775.5 649V645.5H772M659.5 661V664.5H663M775.5 661V664.5H772M854.5 649V645.5H858M1005.5 649V645.5H1002M854.5 661V664.5H858M1005.5 661V664.5H1002M659.5 668V664.5H663M775.5 668V664.5H772M659.5 679V682.5H663M775.5 679V682.5H772M854.5 668V664.5H858M1005.5 668V664.5H1002M854.5 679V682.5H858M1005.5 679V682.5H1002M706.5 668V664.5H710M775.5 668V664.5H772M706.5 679V682.5H710M775.5 679V682.5H772M367.5 713V709.5H371M551.5 713V709.5H548M367.5 737V740.5H371M551.5 737V740.5H548M747.5 713V709.5H751M933.5 713V709.5H930M747.5 737V740.5H751M933.5 737V740.5H930" fill="none" stroke="#000" stroke-width="1"/></svg>
<div class="a" style="left:762px;top:211px;width:4px;height:4px;border-radius:50%;background:#000"></div>
<div class="a" style="left:870px;top:211px;width:4px;height:4px;border-radius:50%;background:#000"></div>
<div class="a" style="left:978px;top:211px;width:4px;height:4px;border-radius:50%;background:#000"></div>
<div class="a" style="left:762px;top:220px;width:4px;height:4px;border-radius:50%;background:#000"></div>
<div class="a" style="left:762px;top:229px;width:4px;height:4px;border-radius:50%;background:#000"></div>
<div class="a" style="left:870px;top:229px;width:4px;height:4px;border-radius:50%;background:#000"></div>
</div></div>
<div class="a" style="left:975px;top:224px;width:217px;height:329px;background:rgba(0,0,0,.14)"></div>
<div class="a" style="left:972px;top:221px;width:217px;height:329px;background:#f0f0f0;border:1px solid;border-color:#e3e3e3 #696969 #696969 #e3e3e3;box-shadow:inset 1px 1px 0 #fff,inset -1px -1px 0 #a0a0a0"></div>
<div class="a" style="left:975px;top:346px;width:211px;height:19px;background:#3399ff"></div>
<div class="t" style="left:996.5px;top:225px;height:14px;line-height:14px;font-size:11px;letter-spacing:-0.285px;color:#000;">C<span class="u">u</span>t</div>
<div class="t" style="left:1135.5px;top:225px;height:14px;line-height:14px;font-size:11px;letter-spacing:-0.360px;color:#000;">Ctrl+X</div>
<div class="t" style="left:996.5px;top:244px;height:14px;line-height:14px;font-size:11px;letter-spacing:-0.321px;color:#000;"><span class="u">C</span>opy</div>
<div class="t" style="left:1135.5px;top:244px;height:14px;line-height:14px;font-size:11px;letter-spacing:-0.367px;color:#000;">Ctrl+C</div>
<div class="t" style="left:996.5px;top:263px;height:14px;line-height:14px;font-size:11px;letter-spacing:-0.281px;color:#a0a0a0;"><span class="u">P</span>aste</div>
<div class="t" style="left:1135.5px;top:263px;height:14px;line-height:14px;font-size:11px;letter-spacing:-0.360px;color:#a0a0a0;">Ctrl+V</div>
<div class="t" style="left:996.5px;top:282px;height:14px;line-height:14px;font-size:11px;letter-spacing:-0.265px;color:#000;"><span class="u">D</span>elete</div>
<div class="t" style="left:1135.5px;top:282px;height:14px;line-height:14px;font-size:11px;letter-spacing:-0.385px;color:#000;">Del</div>
<div class="t" style="left:996.5px;top:301px;height:14px;line-height:14px;font-size:11px;letter-spacing:-0.223px;color:#000;">Select <span class="u">a</span>ll</div>
<div class="t" style="left:1135.5px;top:301px;height:14px;line-height:14px;font-size:11px;letter-spacing:-0.360px;color:#000;">Ctrl+A</div>
<div class="t" style="left:996.5px;top:329px;height:14px;line-height:14px;font-size:11px;letter-spacing:-0.201px;color:#000;">Edit...</div>
<div class="t" style="left:996.5px;top:348px;height:14px;line-height:14px;font-size:11px;letter-spacing:-0.230px;color:#fff;">Variable format...</div>
<div class="t" style="left:996.5px;top:367px;height:14px;line-height:14px;font-size:11px;letter-spacing:-0.223px;color:#000;">Font...</div>
<div class="t" style="left:996.5px;top:386px;height:14px;line-height:14px;font-size:11px;letter-spacing:-0.253px;color:#000;">Clear contents</div>
<div class="t" style="left:996.5px;top:415px;height:14px;line-height:14px;font-size:11px;letter-spacing:-0.262px;color:#000;">Stretched</div>
<div class="t" style="left:996.5px;top:434px;height:14px;line-height:14px;font-size:11px;letter-spacing:-0.294px;color:#000;">Word wrap</div>
<div class="t" style="left:996.5px;top:453px;height:14px;line-height:14px;font-size:11px;letter-spacing:-0.251px;color:#000;">Auto size</div>
<div class="t" style="left:996.5px;top:472px;height:14px;line-height:14px;font-size:11px;letter-spacing:-0.241px;color:#000;">Text only</div>
<div class="t" style="left:996.5px;top:491px;height:14px;line-height:14px;font-size:11px;letter-spacing:-0.266px;color:#000;">Suppress repeated values</div>
<div class="t" style="left:996.5px;top:510px;height:14px;line-height:14px;font-size:11px;letter-spacing:-0.263px;color:#000;">Hide zeros</div>
<div class="t" style="left:996.5px;top:529px;height:14px;line-height:14px;font-size:11px;letter-spacing:-0.263px;color:#000;">Underlines</div>
<div class="a" style="left:975px;top:322px;width:211px;height:2px;border-top:1px solid #a0a0a0;border-bottom:1px solid #fff"></div>
<div class="a" style="left:975px;top:408px;width:211px;height:2px;border-top:1px solid #a0a0a0;border-bottom:1px solid #fff"></div>
<svg class="a" style="left:976px;top:224px" width="16" height="16" viewBox="0 0 16 16" shape-rendering="crispEdges"><g shape-rendering="auto" fill="none" stroke="#000080" stroke-width="1.2"><path d="M5.5 1l4.5 10M10.5 1l-4.5 10"/><circle cx="5" cy="12.5" r="2"/><circle cx="11" cy="12.5" r="2"/></g></svg>
<svg class="a" style="left:976px;top:243px" width="16" height="16" viewBox="0 0 16 16" shape-rendering="crispEdges"><path d="M1.5 1.5h5l2 2v7h-7z" fill="#fff" stroke="#000040"/><rect x="3" y="4" width="4" height="1" fill="#000040"/><rect x="3" y="6" width="4" height="1" fill="#000040"/><rect x="3" y="8" width="4" height="1" fill="#000040"/><path d="M6.5 5.5h5l3 3v6h-8z" fill="#fff" stroke="#000040"/><path d="M11.5 5.5v3h3" fill="none" stroke="#000040"/><rect x="8" y="9" width="5" height="1" fill="#000040"/><rect x="8" y="11" width="5" height="1" fill="#000040"/><rect x="8" y="13" width="5" height="1" fill="#000040"/></svg>
<svg class="a" style="left:976px;top:262px" width="16" height="16" viewBox="0 0 16 16" shape-rendering="crispEdges"><path d="M1.5 3.5h11v10h-11z" fill="#e8e8e8" stroke="#a0a0a0"/><path d="M4.5 3.5v-2h5v2z" fill="#e8e8e8" stroke="#a0a0a0"/><path d="M6.5 7.5h6l2 2v5h-8z" fill="#f4f4f4" stroke="#a0a0a0"/><rect x="8" y="10" width="5" height="1" fill="#a0a0a0"/><rect x="8" y="12" width="5" height="1" fill="#a0a0a0"/></svg>
<svg class="a" style="left:976px;top:300px" width="16" height="16" viewBox="0 0 16 16" shape-rendering="crispEdges"><rect x="2.500" y="2.500" width="7" height="6" fill="none" stroke="#000"/><rect x="6.500" y="6.500" width="8" height="7" fill="#f0f0f0" stroke="#000"/><rect x="1" y="1" width="3" height="3" fill="#000"/><rect x="8" y="1" width="3" height="3" fill="#000"/><rect x="1" y="7" width="3" height="3" fill="#000"/><rect x="5" y="5" width="3" height="3" fill="#000"/><rect x="13" y="5" width="3" height="3" fill="#000"/><rect x="5" y="12" width="3" height="3" fill="#000"/><rect x="13" y="12" width="3" height="3" fill="#000"/></svg>
<div class="a" style="left:479px;top:345px;width:291px;height:256px;background:#c0d7ee;border:1px solid #3a4a5c;border-top:2px solid #20262e;border-radius:7px 7px 6px 6px;box-shadow:1px 2px 4px rgba(0,0,0,.45), inset 0 0 0 1px #e6f0fa"></div>
<div class="a" style="left:481px;top:347px;width:287px;height:28px;background:linear-gradient(#d4e4f4,#bcd4ec);border-radius:6px 6px 0 0"></div>
<div class="t" style="left:486.5px;top:353px;height:16px;line-height:16px;font-size:12px;letter-spacing:0.167px;">Variable formatting</div>
<div class="a" style="left:688px;top:347px;width:75px;height:19px;border:1px solid #46505c;border-top:none;border-radius:0 0 4px 4px;overflow:hidden;background:linear-gradient(#dbe7f4 0,#cfdfee 45%,#a9c0d8 46%,#bdd0e4 100%)"><div class="a" style="left:26px;top:0;width:48px;height:19px;border-left:1px solid #46505c;background:linear-gradient(#e8a090 0,#dd8272 45%,#c8432b 46%,#d4694f 100%)"></div></div>
<div class="t" style="left:697px;top:347px;height:18px;line-height:18px;font-size:15px;font-weight:bold;color:#fff;text-shadow:0 0 1px #2a3a4c,0 0 1px #2a3a4c,0 0 2px #2a3a4c;">?</div>
<svg class="a" style="left:730px;top:351px" width="16" height="12" viewBox="0 0 16 12"><path d="M2 1.500h4l2 2.400l2-2.400h4l-4 4.500l4 4.500h-4l-2-2.400l-2 2.400h-4l4-4.500z" fill="#fff" stroke="#5a2a20" stroke-width=".9"/></svg>
<div class="a" style="left:485px;top:375px;width:278px;height:219px;background:#f0f0f0;border:1px solid #8595a8"></div>
<div class="a" style="left:491px;top:382px;width:267px;height:174px;border:1px solid;border-color:#a0a0a0 #fff #fff #a0a0a0;box-shadow:inset 1px 1px 0 #fff,inset -1px -1px 0 #a0a0a0"></div>
<div class="a" style="left:498px;top:393px;width:121px;height:97px;background:#fff;border:1px solid #828790"></div>
<div class="a" style="left:626px;top:393px;width:121px;height:97px;background:#fff;border:1px solid #828790"></div>
<div class="a" style="left:500px;top:421px;width:117px;height:13px;background:#3399ff"></div>
<div class="a" style="left:628px;top:434px;width:117px;height:13px;background:#3399ff"></div>
<div class="t" style="left:503px;top:395px;height:13px;line-height:13px;font-size:11px;letter-spacing:-0.252px;color:#000;">Text</div>
<div class="t" style="left:503px;top:408px;height:13px;line-height:13px;font-size:11px;letter-spacing:-0.326px;color:#000;">Number</div>
<div class="t" style="left:503px;top:421px;height:13px;line-height:13px;font-size:11px;letter-spacing:-0.290px;color:#fff;">Date</div>
<div class="t" style="left:503px;top:434px;height:13px;line-height:13px;font-size:11px;letter-spacing:-0.300px;color:#000;">Time</div>
<div class="t" style="left:503px;top:447px;height:13px;line-height:13px;font-size:11px;letter-spacing:-0.288px;color:#000;">Boolean</div>
<div class="t" style="left:630.5px;top:395px;height:13px;line-height:13px;font-size:11px;letter-spacing:-0.263px;color:#000;">11.15.98</div>
<div class="t" style="left:630.5px;top:408px;height:13px;line-height:13px;font-size:11px;letter-spacing:-0.271px;color:#000;">11.15.1998</div>
<div class="t" style="left:630.5px;top:421px;height:13px;line-height:13px;font-size:11px;letter-spacing:-0.275px;color:#000;">15 nov 1998</div>
<div class="t" style="left:630.5px;top:434px;height:13px;line-height:13px;font-size:11px;letter-spacing:-0.287px;color:#fff;">15 november 1998</div>
<div class="t" style="left:630.5px;top:447px;height:13px;line-height:13px;font-size:11px;letter-spacing:-0.316px;color:#000;">Custom</div>
<div class="t" style="left:498.5px;top:501px;height:14px;line-height:14px;font-size:11px;letter-spacing:-0.248px;color:#a8a8a8;"><span class="u">D</span>ecimal digits</div>
<div class="a" style="left:574px;top:497px;width:25px;height:21px;border:1px solid #b4b8c0;background:#f0f0f0"></div>
<div class="t" style="left:631.5px;top:501px;height:14px;line-height:14px;font-size:11px;letter-spacing:-0.280px;color:#a8a8a8;">Decimal <span class="u">s</span>eparator</div>
<div class="a" style="left:722px;top:497px;width:25px;height:21px;border:1px solid #b4b8c0;background:#f0f0f0"></div>
<div class="t" style="left:552px;top:529px;height:14px;line-height:14px;font-size:11px;letter-spacing:-0.472px;color:#a8a8a8;">Custom <span class="u">f</span>ormat</div>
<div class="a" style="left:626px;top:526px;width:121px;height:20px;border:1px solid #b4b8c0;background:#f0f0f0"></div>
<div class="a" style="left:604px;top:566px;width:73px;height:22px;border:1px solid #3c7fb1;border-radius:3px;background:linear-gradient(#eaf6fd 0,#d9f0fc 48%,#bee6fd 50%,#a7d9f5 100%);box-shadow:inset 0 0 0 1px #48d8fb55"></div>
<div class="t" style="left:633px;top:570px;height:14px;line-height:14px;font-size:11px;">OK</div>
<div class="a" style="left:684px;top:566px;width:73px;height:22px;border:1px solid #707070;border-radius:3px;background:linear-gradient(#f2f2f2 0,#ebebeb 48%,#dddddd 50%,#cfcfcf 100%);box-shadow:inset 0 0 0 1px #fcfcfc"></div>
<div class="t" style="left:704.5px;top:570px;height:14px;line-height:14px;font-size:11px;letter-spacing:-0.207px;">Cancel</div>
<svg class="a" style="left:71px;top:38px" width="41" height="41" viewBox="71 38 41 41"><rect x="76.5" y="43.5" width="30" height="30" rx="8" ry="8" fill="none" stroke="#da2232" stroke-width="5"/></svg>
<svg class="a" style="left:754px;top:205px" width="206" height="38" viewBox="754 205 206 38"><rect x="759.75" y="210.75" width="194.5" height="26.5" rx="10" ry="10" fill="none" stroke="#da2232" stroke-width="5.5"/></svg>
<svg class="a" style="left:968px;top:340px" width="224" height="34" viewBox="968 340 224 34"><rect x="973.5" y="345.5" width="213" height="23" rx="9" ry="9" fill="none" stroke="#da2232" stroke-width="5"/></svg>
<svg class="a" style="left:487px;top:414px" width="132" height="28" viewBox="487 414 132 28"><rect x="492.25" y="419.25" width="121.5" height="17.5" rx="7" ry="7" fill="none" stroke="#da2232" stroke-width="4.5"/></svg>
<svg class="a" style="left:623px;top:427px" width="127" height="27" viewBox="623 427 127 27"><rect x="628.25" y="432.25" width="116.5" height="16.5" rx="7" ry="7" fill="none" stroke="#da2232" stroke-width="4.5"/></svg>
<svg class="a" style="left:595px;top:558px" width="89" height="38" viewBox="595 558 89 38"><rect x="600.5" y="563.5" width="78" height="27" rx="9" ry="9" fill="none" stroke="#da2232" stroke-width="5"/></svg>
<svg class="a" style="left:805px;top:450px" width="145" height="68" viewBox="805 450 145 68"><path d="M814.500 483L878 459.500V470.500H940V496H878V507.500Z" fill="none" stroke="#da2232" stroke-width="4" stroke-linejoin="miter"/></svg>
<svg class="a" style="left:738px;top:176px" width="22" height="31" viewBox="738 176 22 31"><text transform="translate(738.48,202.00) scale(0.2804,0.3151)" x="0" y="0" font-family="DejaVu Sans" font-weight="bold" font-size="100" fill="#da2232">1</text></svg>
<svg class="a" style="left:941px;top:361px" width="23" height="30" viewBox="941 361 23 30"><text transform="translate(942.28,386.70) scale(0.2906,0.3047)" x="0" y="0" font-family="DejaVu Sans" font-weight="bold" font-size="100" fill="#da2232">2</text></svg>
<svg class="a" style="left:589px;top:375px" width="23" height="31" viewBox="589 375 23 31"><text transform="translate(590.64,400.54) scale(0.2855,0.3046)" x="0" y="0" font-family="DejaVu Sans" font-weight="bold" font-size="100" fill="#da2232">3</text></svg>
<svg class="a" style="left:94px;top:78px" width="25" height="31" viewBox="94 78 25 31"><text transform="translate(96.31,104.16) scale(0.2876,0.3172)" x="0" y="0" font-family="DejaVu Sans" font-weight="bold" font-size="100" fill="#da2232">4</text></svg>
<div class="a" style="left:1340px;top:96px;width:27px;height:241px;border:1px solid;border-color:#fff #a0a0a0 #a0a0a0 #fff"></div>
<div class="a" style="left:1343px;top:100px;width:22px;height:3px;border-top:1px solid #fff;border-bottom:1px solid #a0a0a0"></div>
<div class="a" style="left:1343px;top:103px;width:22px;height:3px;border-top:1px solid #fff;border-bottom:1px solid #a0a0a0"></div>
<div class="a" style="left:1344px;top:222px;width:19px;height:2px;border-top:1px solid #a0a0a0;border-bottom:1px solid #fff"></div>
<svg class="a" style="left:1340px;top:96px" width="26" height="244" viewBox="1340 96 26 244" shape-rendering="crispEdges" fill="none"><path d="M1345 117.5H1353.5V114M1352 125.5H1359.5V122M1354 138.5H1359.5V134M1348 143.5H1357.5V140M1345 148.5H1352.5V145M1347 163.5H1355.5V161M1348 167.5H1356.5V165M1351 171.5H1359.5V169M1345 190.5H1348.5V184M1349 190.5H1352.5V184M1357 190.5H1360.5V184M1351 205.5H1359.5V202M1345 213.5H1353.5V210M1355 238.5H1358.5V231M1347 244.5H1350.5V238M1345 258.5H1348.5V253M1351 264.5H1355.5V256M1357 267.5H1360.5V262M1345 288.5H1348.5V280M1349 285.5H1352.5V277M1353 284.5H1356.5V276M1347 297.500H1354M1347 301.500H1355M1347 310.5H1354.5V307M1346 326.5H1350.5V319M1355 332.5H1358.5V325" stroke="#909090"/><path d="M1345 123.5H1351M1347.5 121.5L1345.5 123.5L1347.5 125.5M1347 136.5H1353M1349.5 134.5L1347.5 136.5L1349.5 138.5M1354 147.5H1360M1357.5 145.5L1359.5 147.5L1357.5 149.5M1345 158.5H1361M1347.5 156.5L1345.5 158.5L1347.5 160.5M1358.5 156.5L1360.5 158.5L1358.5 160.5M1345.500 155V162M1360.500 155V162M1348 179.5H1354M1351.5 177.5L1353.5 179.5L1351.5 181.5M1355 211.5H1361M1358.5 209.5L1360.5 211.5L1358.5 213.5M1349.5 231V238M1347.5 233.5L1349.5 231.5L1351.5 233.5M1347.5 258V265M1345.5 262.5L1347.5 264.5L1349.5 262.5M1358.5 255V262M1356.5 257.5L1358.5 255.5L1360.5 257.5M1358.5 274V290M1356.5 276.5L1358.5 274.5L1360.5 276.5M1356.5 287.5L1358.5 289.5L1360.5 287.5M1356 274.500H1361M1356 289.500H1361M1358.5 299V306M1356.5 303.5L1358.5 305.5L1360.5 303.5M1348.5 327V335M1346.5 332.5L1348.5 334.5L1350.5 332.5" stroke="#000"/></svg>
<div class="a" style="left:0px;top:717px;width:1366px;height:21px;background:#f0f0f0"></div>
<div class="t" style="left:2px;top:722px;height:14px;line-height:14px;font-size:11px;letter-spacing:-0.467px;font-weight:bold;">Pixels</div>
<div class="a" style="left:74px;top:719px;width:2px;height:18px;border-left:1px solid #a0a0a0;border-right:1px solid #fff"></div>
<div class="a" style="left:304px;top:719px;width:2px;height:18px;border-left:1px solid #a0a0a0;border-right:1px solid #fff"></div>
<svg class="a" style="left:80px;top:721px" width="16" height="16" viewBox="0 0 16 16" shape-rendering="crispEdges"><rect x="4.500" y="4.500" width="10" height="10" fill="none" stroke="#000" stroke-dasharray="1 1"/><path d="M4.500 0v6M1 4.500h6" stroke="#000"/></svg>
<div class="t" style="left:99px;top:722px;height:14px;line-height:14px;font-size:11px;letter-spacing:-0.275px;">468;80</div>
<svg class="a" style="left:170px;top:721px" width="16" height="16" viewBox="0 0 16 16" shape-rendering="crispEdges" fill="none"><rect x="4.500" y="5.500" width="10" height="9" stroke="#000" stroke-dasharray="1 1"/><path d="M6 2.500h8M12 .5l2 2l-2 2M14.500 0v5M2.500 7v7M.5 12l2 2l2-2M0 14.500h5" stroke="#000"/></svg>
<div class="t" style="left:189px;top:722px;height:14px;line-height:14px;font-size:11px;letter-spacing:-0.275px;">217;19</div>
<div class="t" style="left:309.5px;top:722px;height:14px;line-height:14px;font-size:11px;letter-spacing:0.072px;font-weight:bold;">Memo6: [Tanggal Transaksi]</div>
<div class="a" style="left:13px;top:733px;width:26px;height:12px;border-radius:50%;background:#9fc3e6;border:1px solid #5d86b0"></div>
</body></html>
